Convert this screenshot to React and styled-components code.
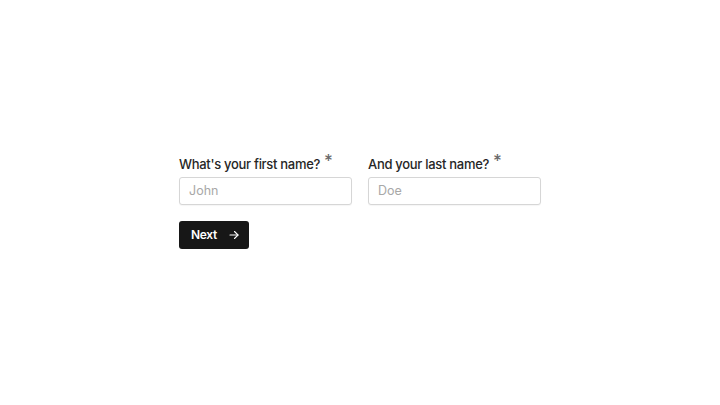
import React from 'react'
import styled, { createGlobalStyle } from 'styled-components'

const GlobalStyle = createGlobalStyle`
  html, body, #root {
    margin: 0;
    height: 100%;
    background: #ffffff;
  }
  body {
    font-family: Inter, "Noto Sans", sans-serif;
    -webkit-font-smoothing: antialiased;
  }
`

const Page = styled.div`
  height: 100%;
  display: flex;
  align-items: center;
  justify-content: center;
`

const Form = styled.form`
  display: flex;
  flex-direction: column;
  gap: 16px;
  margin-bottom: 4px;
`

const Row = styled.div`
  display: flex;
  gap: 16px;
`

const Field = styled.label`
  display: flex;
  flex-direction: column;
  gap: 2px;
  width: 173px;
`

const LabelText = styled.span`
  font-size: 13px;
  font-weight: 500;
  letter-spacing: -0.3px;
  color: #262626;
  line-height: 21px;
  white-space: nowrap;
`

const Required = styled.span`
  color: #6b6b6b;
  font-size: 17px;
  margin-left: 4px;
  position: relative;
  top: -2px;
`

const Input = styled.input`
  box-sizing: border-box;
  width: 100%;
  height: 28px;
  padding: 0 9px;
  border: 1px solid #d6d6d6;
  border-radius: 3px;
  box-shadow: 0 1px 1px rgba(0, 0, 0, 0.04);
  font-family: inherit;
  font-size: 12.5px;
  color: #262626;
  outline: none;
  &::placeholder {
    color: #a8a8a8;
  }
`

const Button = styled.button`
  align-self: flex-start;
  box-sizing: border-box;
  display: flex;
  align-items: center;
  gap: 11px;
  height: 28px;
  width: 70px;
  padding: 0 0 0 12px;
  border: none;
  border-radius: 3px;
  background: #171717;
  color: #ffffff;
  font-family: inherit;
  font-size: 12px;
  font-weight: 600;
  letter-spacing: -0.3px;
  cursor: pointer;
  svg {
    flex-shrink: 0;
  }
`

const Arrow = () => (
  <svg width="12" height="12" viewBox="0 0 24 24" fill="none" stroke="currentColor" strokeWidth="2.2" strokeLinecap="round" strokeLinejoin="round">
    <path d="M4 12h16" />
    <path d="M13 5l7 7-7 7" />
  </svg>
)

export default function App() {
  return (
    <>
      <GlobalStyle />
      <Page>
        <Form onSubmit={e => e.preventDefault()}>
          <Row>
            <Field>
              <LabelText>What's your first name?<Required>*</Required></LabelText>
              <Input placeholder="John" />
            </Field>
            <Field>
              <LabelText>And your last name?<Required>*</Required></LabelText>
              <Input placeholder="Doe" />
            </Field>
          </Row>
          <Button type="submit">
            Next
            <Arrow />
          </Button>
        </Form>
      </Page>
    </>
  )
}
